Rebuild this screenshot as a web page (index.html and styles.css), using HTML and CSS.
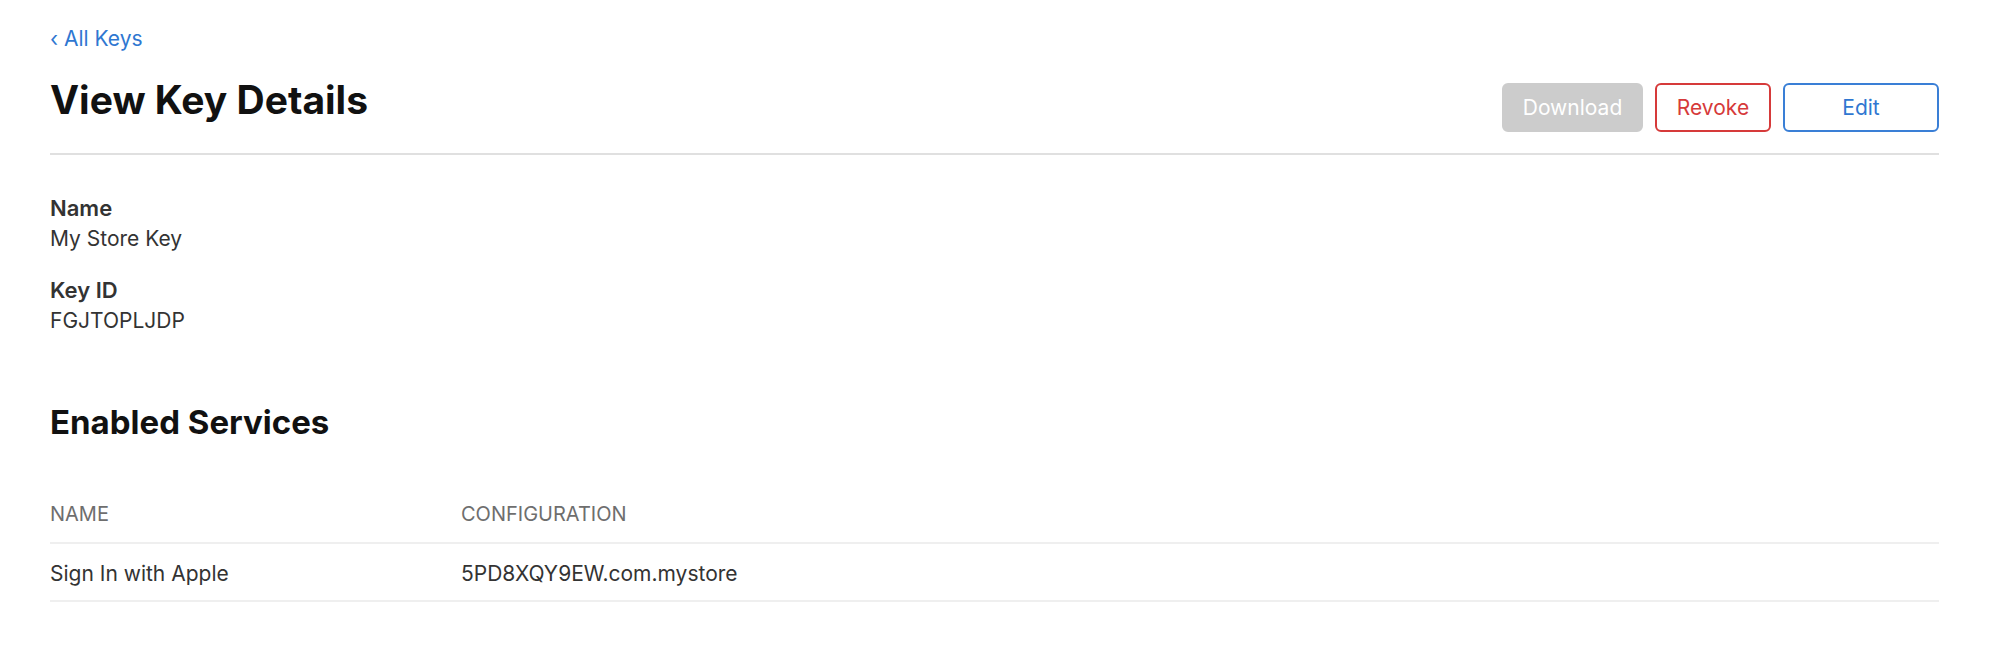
FILE: index.html
```html
<!DOCTYPE html>
<html lang="en">
<head>
<meta charset="utf-8">
<title>View Key Details</title>
<link rel="stylesheet" href="styles.css">
</head>
<body>
<div class="page">
  <a class="back" href="#"><span class="chev">‹</span> All Keys</a>
  <header class="head">
    <h1 class="title">View Key Details</h1>
    <div class="actions">
      <button class="btn btn-disabled" type="button">Download</button>
      <button class="btn btn-danger" type="button">Revoke</button>
      <button class="btn btn-primary" type="button">Edit</button>
    </div>
  </header>
  <dl class="details">
    <dt>Name</dt>
    <dd>My Store Key</dd>
    <dt>Key ID</dt>
    <dd>FGJTOPLJDP</dd>
  </dl>
  <h2 class="section">Enabled Services</h2>
  <table class="services">
    <thead>
      <tr><th class="col-name">NAME</th><th>CONFIGURATION</th></tr>
    </thead>
    <tbody>
      <tr><td class="col-name">Sign In with Apple</td><td>5PD8XQY9EW.com.mystore</td></tr>
    </tbody>
  </table>
</div>
</body>
</html>
```
FILE: styles.css
```css
* { box-sizing: border-box; }
html, body { margin: 0; padding: 0; background: #fff; }
body {
  font-family: Inter, "Noto Sans", "Liberation Sans", sans-serif;
  color: #333;
}
.page {
  padding: 25px 60px 0 50px;
}
.back {
  display: block;
  font-size: 21px;
  line-height: 28px;
  color: #2f77d1;
  text-decoration: none;
}
.chev { font-size: 21px; }
.head {
  display: flex;
  justify-content: space-between;
  align-items: flex-start;
  margin-top: 22px;
  padding-bottom: 21px;
  border-bottom: 2px solid #e0e0e0;
}
.title {
  margin: 0;
  font-size: 39px;
  line-height: 50px;
  font-weight: 700;
  color: #111;
}
.actions {
  display: flex;
  gap: 12px;
  margin-top: 8px;
}
.btn {
  height: 49px;
  padding: 0 16px;
  border: 2px solid transparent;
  border-radius: 6px;
  background: #fff;
  font-family: inherit;
  font-size: 21px;
  line-height: 1;
}
.btn-disabled {
  min-width: 141px;
  background: #cccccc;
  border-color: #cccccc;
  color: #fff;
}
.btn-danger {
  min-width: 116px;
  border-color: #d63a3a;
  color: #d63a3a;
}
.btn-primary {
  min-width: 156px;
  border-color: #3a7fd6;
  color: #2f77d1;
}
.details {
  margin: 37px 0 0;
}
.details dt {
  font-size: 22px;
  line-height: 32px;
  font-weight: 600;
  color: #333;
}
.details dd {
  margin: 0 0 20px;
  font-size: 21px;
  line-height: 30px;
  color: #333;
}
.details dd:last-child { margin-bottom: 0; }
.section {
  margin: 66px 0 0;
  font-size: 33px;
  line-height: 40px;
  font-weight: 700;
  color: #111;
}
.services {
  width: 100%;
  margin-top: 60px;
  border-collapse: collapse;
}
.services th {
  text-align: left;
  font-weight: 400;
  font-size: 20px;
  line-height: 24px;
  color: #6e6e6e;
  padding: 0 0 16px;
  border-bottom: 2px solid #efefef;
}
.services td {
  font-size: 21px;
  line-height: 26px;
  color: #333;
  padding: 17px 0 13px;
  border-bottom: 2px solid #efefef;
}
.services .col-name { width: 411px; }
```
